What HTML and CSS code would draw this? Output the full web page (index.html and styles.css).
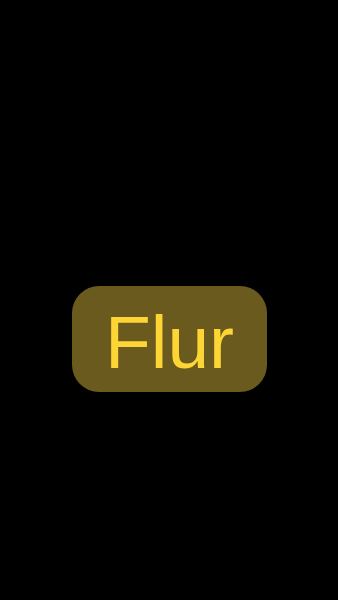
FILE: index.html
```html
<!DOCTYPE html>
<html lang="de">
<head>
    <meta charset="UTF-8">
    <meta name="viewport" content="width=device-width, initial-scale=1.0">
    <title>Flur</title>
    <link rel="stylesheet" href="styles.css">
</head>
<body>
    <div class="screen">
        <!-- Raumname -->
        <div class="room-label">Flur</div>
    </div>
</body>
</html>
```

FILE: styles.css
```css
* {
    margin: 0;
    padding: 0;
    box-sizing: border-box;
}

html, body {
    height: 100%;
    background-color: #000;
}

body {
    font-family: "Liberation Sans", Arial, sans-serif;
}

.screen {
    height: 100%;
    display: flex;
    flex-direction: column;
    align-items: center;
    padding-top: 286px;
    padding-left: 1px;
}

.room-label {
    width: 195px;
    height: 106px;
    padding-top: 13px;
    background-color: #6a5a1e;
    border-radius: 27px;
    color: #fdd535;
    font-size: 75px;
    line-height: 86px;
    text-align: center;
}
```
